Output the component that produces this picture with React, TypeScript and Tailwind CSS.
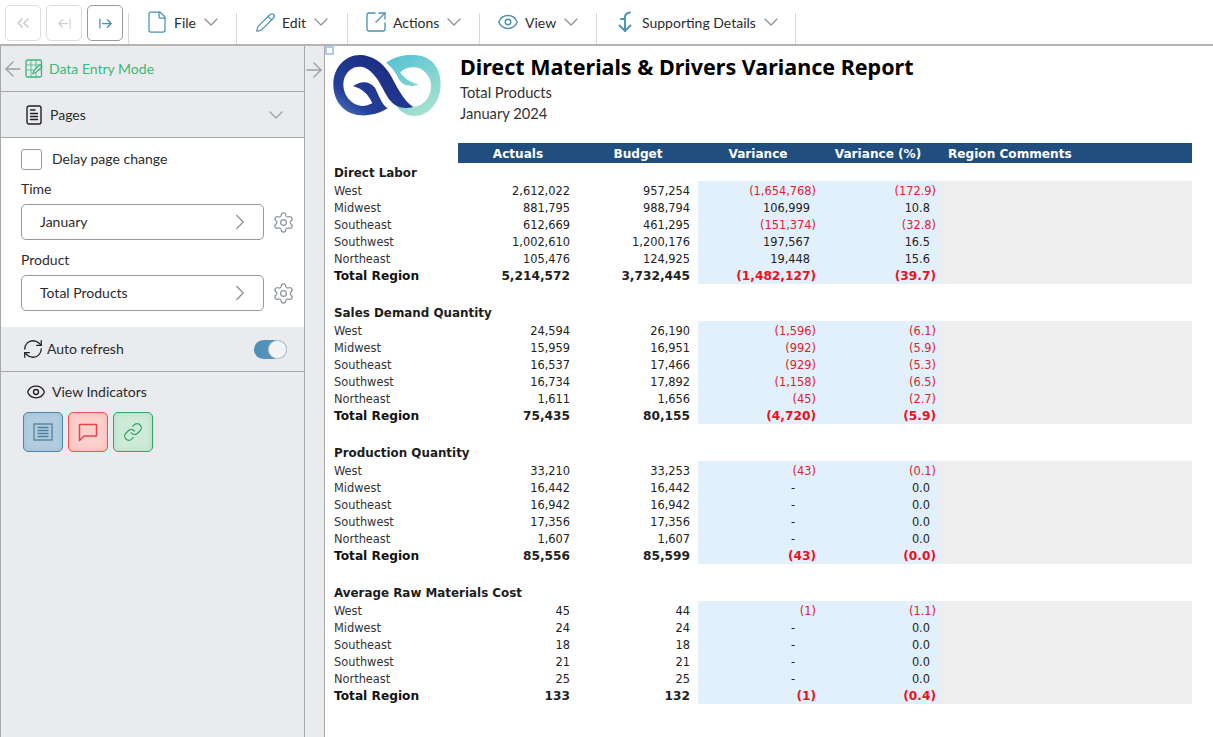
import { ArrowLeft, ArrowLeftFromLine, ArrowRight, ArrowRightFromLine, ChevronDown, ChevronRight, ChevronsLeft, Eye, File, Link, Pencil, RefreshCw, Settings, SquareArrowOutUpRight } from "lucide-react";
import type { ReactNode } from "react";

type Row = { name: string; actuals: string; budget: string; variance: string; pct: string };

const regions = ["West", "Midwest", "Southeast", "Southwest", "Northeast", "Total Region"];

const build = (data: string[][]): Row[] =>
    data.map((d, i) => ({ name: regions[i], actuals: d[0], budget: d[1], variance: d[2], pct: d[3] }));

const sections = [
    {
        title: "Direct Labor",
        rows: build([
            ["2,612,022", "957,254", "(1,654,768)", "(172.9)"],
            ["881,795", "988,794", "106,999", "10.8"],
            ["612,669", "461,295", "(151,374)", "(32.8)"],
            ["1,002,610", "1,200,176", "197,567", "16.5"],
            ["105,476", "124,925", "19,448", "15.6"],
            ["5,214,572", "3,732,445", "(1,482,127)", "(39.7)"],
        ]),
    },
    {
        title: "Sales Demand Quantity",
        rows: build([
            ["24,594", "26,190", "(1,596)", "(6.1)"],
            ["15,959", "16,951", "(992)", "(5.9)"],
            ["16,537", "17,466", "(929)", "(5.3)"],
            ["16,734", "17,892", "(1,158)", "(6.5)"],
            ["1,611", "1,656", "(45)", "(2.7)"],
            ["75,435", "80,155", "(4,720)", "(5.9)"],
        ]),
    },
    {
        title: "Production Quantity",
        rows: build([
            ["33,210", "33,253", "(43)", "(0.1)"],
            ["16,442", "16,442", "-", "0.0"],
            ["16,942", "16,942", "-", "0.0"],
            ["17,356", "17,356", "-", "0.0"],
            ["1,607", "1,607", "-", "0.0"],
            ["85,556", "85,599", "(43)", "(0.0)"],
        ]),
    },
    {
        title: "Average Raw Materials Cost",
        rows: build([
            ["45", "44", "(1)", "(1.1)"],
            ["24", "24", "-", "0.0"],
            ["18", "18", "-", "0.0"],
            ["21", "21", "-", "0.0"],
            ["25", "25", "-", "0.0"],
            ["133", "132", "(1)", "(0.4)"],
        ]),
    },
];

function MenuItem({ icon, label, className }: { icon: ReactNode; label: string; className: string }) {
    return (
        <div className={`flex items-center h-[31px] pb-[13px] self-end border-r border-[#d9d9d9] ${className}`}>
            {icon}
            <span className="text-[14px] text-[#2b2b2b]">{label}</span>
            <ChevronDown size={24} strokeWidth={1.3} className="text-[#8b9298] ml-[3px] shrink-0" />
        </div>
    );
}

function NavButton({ children, active }: { children: ReactNode; active?: boolean }) {
    return (
        <div className={`w-[36px] h-[36px] rounded-[5px] border flex items-center justify-center ${active ? "border-[#9a9a9a] text-[#4a90b8]" : "border-[#dddddd] text-[#cfcfcf]"}`}>
            {children}
        </div>
    );
}

function SupportingIcon() {
    return (
        <svg width="14" height="22" viewBox="0 0 14 22" fill="none" stroke="#4a90b8" strokeWidth="1.9" strokeLinecap="round" strokeLinejoin="round">
            <path d="M12 1.5 C9 2 7 3.5 7 6 V20" />
            <path d="M1.5 14.5 L7 20 L12.5 14.5" />
            <path d="M3 8 H7" />
        </svg>
    );
}

function DataEntryIcon() {
    return (
        <svg width="18" height="19" viewBox="0 0 18 19" fill="none" stroke="#3cb878" strokeWidth="1.3">
            <rect x="1" y="1" width="15.5" height="17" rx="1.5" />
            <path d="M1 6 H16.5 M1 11 H16.5 M6 1 V18 M11 1 V18" strokeWidth="0.8" />
            <path d="M8 14.5 L9 11.5 L15 5.5 L17 7.5 L11 13.5 Z" fill="#e9ebee" strokeWidth="1.3" />
        </svg>
    );
}

function PagesIcon() {
    return (
        <svg width="16" height="20" viewBox="0 0 16 20" fill="none" stroke="#222" strokeWidth="1.4" strokeLinecap="round">
            <rect x="1" y="1" width="14" height="18" rx="2" />
            <path d="M4.5 5 H9 M4.5 8.5 H11.5 M4.5 11.5 H11.5 M4.5 14.5 H11.5" />
        </svg>
    );
}

function ListIcon() {
    return (
        <svg width="20" height="18" viewBox="0 0 20 18" fill="none" stroke="#4f7f9f" strokeWidth="1.3">
            <rect x="1" y="1" width="18" height="16" />
            <path d="M4.5 4.5 H15.5 M4.5 7.5 H15.5 M4.5 10.5 H15.5 M4.5 13.5 H15.5" />
        </svg>
    );
}

function CommentIcon() {
    return (
        <svg width="20" height="19" viewBox="0 0 20 19" fill="none" stroke="#e0444c" strokeWidth="1.5" strokeLinejoin="round">
            <path d="M1.5 1.5 H18.5 V13 H6 L1.5 17.5 Z" />
        </svg>
    );
}

function Logo() {
    return (
        <svg width="108" height="61" viewBox="25 47 322 183" className="shrink-0">
            <defs>
                <linearGradient id="navy" x1="0" y1="1" x2="1" y2="0">
                    <stop offset="0" stopColor="#5a7fc0" />
                    <stop offset="0.25" stopColor="#24409a" />
                    <stop offset="1" stopColor="#1a2478" />
                </linearGradient>
                <linearGradient id="teal" x1="0" y1="0" x2="0.6" y2="1">
                    <stop offset="0" stopColor="#4fc0d4" />
                    <stop offset="1" stopColor="#a5e0d0" />
                </linearGradient>
            </defs>
            <path fill="url(#teal)" d="M183 70 C215 48 255 42 290 50 C330 62 347 95 347 135 C347 190 310 230 270 230 C240 230 220 212 205 188 C225 198 245 204 265 203 C300 198 320 170 318 135 C315 105 290 82 262 84 C245 85 232 92 226 100 C240 118 258 130 282 135 C262 144 238 140 225 125 C215 110 210 90 183 70 Z" />
            <path fill="url(#navy)" d="M188 207 C165 222 135 230 105 228 C60 224 25 190 25 135 C25 85 60 47 105 47 C140 47 175 70 195 105 C215 140 235 185 265 203 C235 210 212 205 192 180 C175 155 165 125 145 105 C130 85 108 78 90 84 C68 92 55 112 55 135 C55 170 80 198 112 200 C122 200 132 197 142 192 C130 165 112 148 84 140 C110 122 135 126 150 145 C160 165 170 195 188 207 Z" />
        </svg>
    );
}

function Cell({ value, bold, right }: { value: string; bold?: boolean; right: string }) {
    const neg = value.startsWith("(");
    const dash = value === "-";
    return (
        <div className={`text-right ${neg ? (bold ? "text-[#ee0f1c]" : "text-[#e0202c]") : "text-[#222]"} ${neg ? "" : right} ${dash ? "pr-[21px]" : ""}`}>
            {value}
        </div>
    );
}

function Section({ title, rows }: { title: string; rows: Row[] }) {
    return (
        <div className="mb-[19px]">
            <div className="h-[18px] leading-[20px] font-bold text-[#1c1c1c] pl-[9px] text-[11.9px]">{title}</div>
            {rows.map((r) => {
                const total = r.name === "Total Region";
                return (
                    <div key={r.name} className={`grid grid-cols-[245px_120px_8px_118px_120px_4px_252px] leading-[21px] ${total ? "grid-rows-[18px] font-bold text-[12.2px] text-[#111]" : "grid-rows-[17px] text-[#333]"}`}>
                        <div className="pl-[9px] flex justify-between">
                            <span>{r.name}</span>
                            <span className="text-[#222]">{r.actuals}</span>
                        </div>
                        <div className="text-right text-[#222]">{r.budget}</div>
                        <div />
                        <div className="bg-[#e2f0fb]">
                            <Cell value={r.variance} bold={total} right={r.variance === "-" ? "" : "pr-[6px]"} />
                        </div>
                        <div className="bg-[#e2f0fb]">
                            <Cell value={r.pct} bold={total} right="pr-[6px]" />
                        </div>
                        <div className="bg-[#e2f0fb]" />
                        <div className="bg-[#eeeeee]" />
                    </div>
                );
            })}
        </div>
    );
}

function Picker({ value }: { value: string }) {
    return (
        <div className="flex items-center mt-[5px]">
            <div className="w-[243px] h-[36px] shrink-0 rounded-[5px] border border-[#9a9a9a] flex items-center justify-between pl-[18px] pr-[10px]">
                <span className="text-[14px] text-[#2b2b2b] pb-[2px]">{value}</span>
                <ChevronRight size={26} strokeWidth={1.2} className="text-[#8b9298]" />
            </div>
            <Settings size={23} strokeWidth={1.3} className="text-[#8b9298] ml-[8px] shrink-0" />
        </div>
    );
}

export default function App() {
    return (
        <div className="w-[1213px] h-[737px] overflow-hidden bg-white flex flex-col font-['Lato','Noto_Sans',sans-serif] text-[#2b2b2b]">
            {/* toolbar */}
            <div className="h-[46px] shrink-0 flex items-start border-b-2 border-[#b4b4b4] pl-[5px]">
                <div className="flex gap-[5px] pt-[5px] pr-[5px] self-stretch">
                    <NavButton><ChevronsLeft size={20} strokeWidth={2} /></NavButton>
                    <NavButton><ArrowLeftFromLine size={15} strokeWidth={2} /></NavButton>
                    <NavButton active><ArrowRightFromLine size={15} strokeWidth={2} /></NavButton>
                </div>
                <div className="h-[31px] self-end border-r border-[#d9d9d9]" />
                <MenuItem className="w-[108px] pl-[16px]" label="File" icon={<File size={24} strokeWidth={1.25} className="text-[#4a90b8] mr-[5px]" />} />
                <MenuItem className="w-[111px] pl-[18px]" label="Edit" icon={<Pencil size={21} strokeWidth={1.4} className="text-[#4a90b8] mr-[6px]" />} />
                <MenuItem className="w-[132px] pl-[16px]" label="Actions" icon={<SquareArrowOutUpRight size={24} strokeWidth={1.3} className="text-[#4a90b8] mr-[5px]" />} />
                <MenuItem className="w-[117px] pl-[17px]" label="View" icon={<Eye size={22} strokeWidth={1.6} className="text-[#4a90b8] mr-[6px]" />} />
                <MenuItem className="w-[199px] pl-[21px]" label="Supporting Details" icon={<span className="mr-[10px] flex"><SupportingIcon /></span>} />
            </div>

            <div className="flex-1 flex min-h-0">
                {/* left panel */}
                <div className="w-[305px] shrink-0 bg-[#e9ebee] border-l border-r border-[#a8a8a8] flex flex-col">
                    <div className="h-[46px] flex items-center border-b border-[#a8a8a8]">
                        <ArrowLeft size={24} strokeWidth={1.4} className="text-[#9aa0a6] shrink-0" />
                        <DataEntryIcon />
                        <span className="text-[14px] text-[#3cb878] ml-[6px]">Data Entry Mode</span>
                    </div>
                    <div className="h-[46px] flex items-center border-b border-[#a8a8a8] pl-[25px] pr-[16px]">
                        <PagesIcon />
                        <span className="text-[14px] ml-[8px] flex-1">Pages</span>
                        <ChevronDown size={24} strokeWidth={1.3} className="text-[#9aa0a6]" />
                    </div>
                    <div className="bg-white h-[189px] pl-[20px] pt-[11px]">
                        <div className="flex items-center h-[21px]">
                            <div className="w-[21px] h-[21px] rounded-[3px] border border-[#9a9a9a] bg-white" />
                            <span className="text-[14px] ml-[10px] pb-[2px]">Delay page change</span>
                        </div>
                        <div className="text-[14px] mt-[9px] h-[20px] leading-[20px]">Time</div>
                        <Picker value="January" />
                        <div className="text-[14px] mt-[10px] h-[20px] leading-[20px]">Product</div>
                        <Picker value="Total Products" />
                    </div>
                    <div className="h-[45px] flex items-center border-b border-[#a8a8a8] pl-[21px] pr-[17px]">
                        <RefreshCw size={22} strokeWidth={1.4} className="text-[#222]" />
                        <span className="text-[14px] ml-[3px] flex-1 pb-[1px]">Auto refresh</span>
                        <div className="w-[33px] h-[19px] rounded-full bg-gradient-to-r from-[#4d8eb5] to-[#5f98bb] relative">
                            <div className="absolute right-0 top-0 w-[19px] h-[19px] rounded-full bg-[#f2f4f6] border border-[#c4c8cc]" />
                        </div>
                    </div>
                    <div className="pl-[22px] pt-[10px]">
                        <div className="flex items-center h-[20px] pl-[3px]">
                            <Eye size={20} strokeWidth={1.6} className="text-[#222]" />
                            <span className="text-[14px] ml-[6px] pb-[1px]">View Indicators</span>
                        </div>
                        <div className="flex gap-[5px] mt-[10px]">
                            <div className="w-[40px] h-[40px] rounded-[5px] border border-[#4f88ad] bg-[#b3cddf] shadow-[inset_0_0_6px_#9dbdd4] flex items-center justify-center"><ListIcon /></div>
                            <div className="w-[40px] h-[40px] rounded-[5px] border border-[#e8545a] bg-[#fcd0cd] shadow-[inset_0_0_6px_#f5b0ae] flex items-center justify-center"><CommentIcon /></div>
                            <div className="w-[40px] h-[40px] rounded-[5px] border border-[#35a468] bg-[#cdebd8] shadow-[inset_0_0_6px_#aedcc0] flex items-center justify-center"><Link size={20} strokeWidth={1.5} className="text-[#35a468]" /></div>
                        </div>
                    </div>
                </div>

                {/* collapse strip */}
                <div className="w-[20px] shrink-0 bg-[#e9ebee] border-r border-[#a8a8a8] pt-[12px]">
                    <ArrowRight size={24} strokeWidth={1.4} className="text-[#9aa0a6] -ml-[3px] max-w-none" />
                </div>

                {/* report */}
                <div className="flex-1 min-w-0 relative font-['DejaVu_Sans',sans-serif] text-[11.4px]">
                    <div className="absolute left-0 top-0 w-[9px] h-[9px] border-2 border-[#a9cdea] bg-white" />
                    <div className="flex h-[97px] pl-[8px] pt-[9px]">
                        <Logo />
                        <div className="ml-[19px] -mt-[1px] font-['Noto_Sans',sans-serif]">
                            <div className="text-[21.5px] leading-[26px] font-bold text-black">Direct Materials &amp; Drivers Variance Report</div>
                            <div className="font-['Lato',sans-serif] text-[14.7px] leading-[21px] text-[#333] mt-[2px]">Total Products</div>
                            <div className="font-['Lato',sans-serif] text-[14.7px] leading-[21px] text-[#333]">January 2024</div>
                        </div>
                    </div>
                    <div className="ml-[133px] w-[734px] h-[20px] bg-[#1f4e7f] grid grid-cols-[120px_120px_120px_120px_1fr] text-white font-bold text-[12.1px] leading-[22px] text-center">
                        <div>Actuals</div>
                        <div>Budget</div>
                        <div>Variance</div>
                        <div>Variance (%)</div>
                        <div className="text-left pl-[10px]">Region Comments</div>
                    </div>
                    {sections.map((s) => (
                        <Section key={s.title} title={s.title} rows={s.rows} />
                    ))}
                </div>
            </div>
        </div>
    );
}
